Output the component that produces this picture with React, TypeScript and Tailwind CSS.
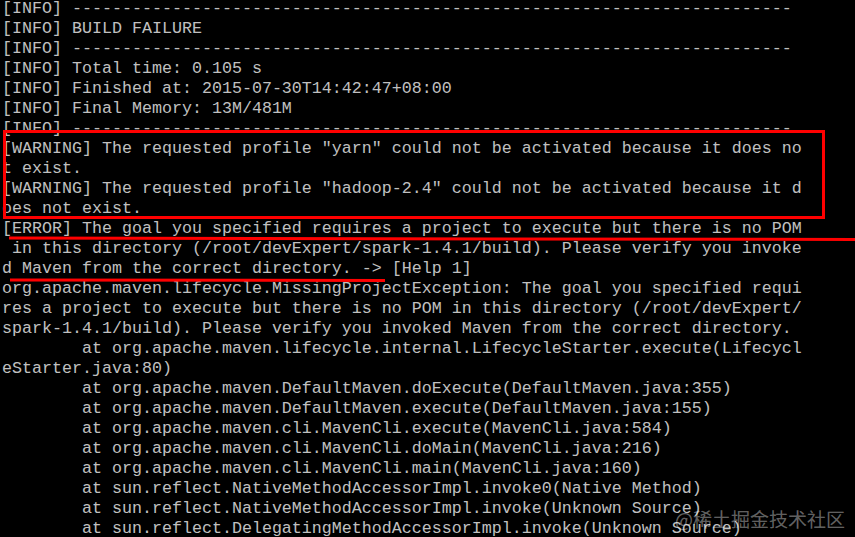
import React from "react";

const dash = "-".repeat(72);
const T = "        ";
const lines: string[] = [
  "[INFO] " + dash,
  "[INFO] BUILD FAILURE",
  "[INFO] " + dash,
  "[INFO] Total time: 0.105 s",
  "[INFO] Finished at: 2015-07-30T14:42:47+08:00",
  "[INFO] Final Memory: 13M/481M",
  "[INFO] " + dash,
  '[WARNING] The requested profile "yarn" could not be activated because it does no',
  "t exist.",
  '[WARNING] The requested profile "hadoop-2.4" could not be activated because it d',
  "oes not exist.",
  "[ERROR] The goal you specified requires a project to execute but there is no POM",
  " in this directory (/root/devExpert/spark-1.4.1/build). Please verify you invoke",
  "d Maven from the correct directory. -> [Help 1]",
  "org.apache.maven.lifecycle.MissingProjectException: The goal you specified requi",
  "res a project to execute but there is no POM in this directory (/root/devExpert/",
  "spark-1.4.1/build). Please verify you invoked Maven from the correct directory.",
  T + "at org.apache.maven.lifecycle.internal.LifecycleStarter.execute(Lifecycl",
  "eStarter.java:80)",
  T + "at org.apache.maven.DefaultMaven.doExecute(DefaultMaven.java:355)",
  T + "at org.apache.maven.DefaultMaven.execute(DefaultMaven.java:155)",
  T + "at org.apache.maven.cli.MavenCli.execute(MavenCli.java:584)",
  T + "at org.apache.maven.cli.MavenCli.doMain(MavenCli.java:216)",
  T + "at org.apache.maven.cli.MavenCli.main(MavenCli.java:160)",
  T + "at sun.reflect.NativeMethodAccessorImpl.invoke0(Native Method)",
  T + "at sun.reflect.NativeMethodAccessorImpl.invoke(Unknown Source)",
  T + "at sun.reflect.DelegatingMethodAccessorImpl.invoke(Unknown Source)",
];

export default function App() {
  return (
    <div className="relative w-[855px] h-[537px] overflow-hidden bg-black">
      <div
        className="flex flex-col pl-[2px] -mt-px text-[#c0c0c0] text-[16.667px] leading-[20px] whitespace-pre"
        style={{ fontFamily: '"Liberation Mono", "Courier New", monospace' }}
      >
        {lines.map((l, i) => (
          <div key={i} className="h-[20px]">
            {l}
          </div>
        ))}
      </div>
      <svg
        className="absolute inset-0 pointer-events-none"
        width="855"
        height="537"
        viewBox="0 0 855 537"
      >
        <rect x="4.5" y="131.5" width="819" height="86" fill="none" stroke="#ff0000" strokeWidth="3" />
        <line x1="9" y1="238" x2="855" y2="239.5" stroke="#ff0000" strokeWidth="3" />
        <line x1="10" y1="280" x2="385" y2="280.5" stroke="#ff0000" strokeWidth="3" />
      </svg>
      <div
        className="absolute right-[10px] bottom-[6px] text-[19px] leading-[24px] text-white/40 whitespace-nowrap"
        style={{ fontFamily: '"Noto Sans CJK SC", "Noto Sans", sans-serif' }}
      >
        @稀土掘金技术社区
      </div>
    </div>
  );
}
